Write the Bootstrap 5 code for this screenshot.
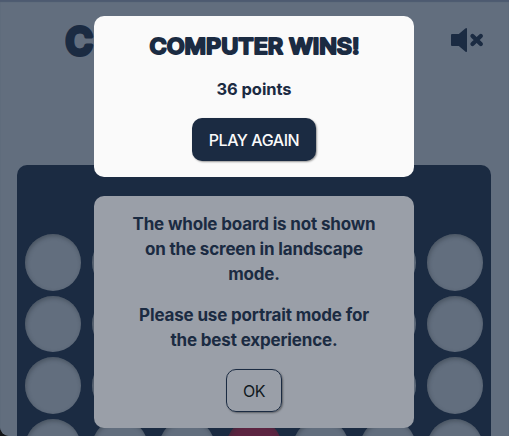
<!DOCTYPE html>
<html lang="en">
<head>
<meta charset="utf-8">
<meta name="viewport" content="width=device-width, initial-scale=1">
<title>Connect Four</title>
<link href="https://cdn.jsdelivr.net/npm/bootstrap@5.3.0/dist/css/bootstrap.min.css" rel="stylesheet">
<style>
:root{--navy:#1b2b42;--slate:#626e7e}
html{background:#111417}
body{height:436px;background:var(--slate);color:var(--navy);font-family:Inter,"Open Sans",sans-serif;border-bottom-left-radius:9px}
.game{height:436px;background:var(--slate);border-bottom-left-radius:9px;box-shadow:inset 0 2px 1px #4d5a70}
.game-head{height:165px;padding:22px 25px 0 65px}
.game-head svg{display:block}
.sound{margin-top:6px}
.board{margin:0 18px 0 17px;height:271px;padding:69px 8px 0;background:var(--navy);border-radius:10px 10px 0 0}
.slots{display:grid;grid-template-columns:repeat(7,56px);column-gap:11px;row-gap:5px}
.slot{height:56.7px;border-radius:50%;background:var(--slate);box-shadow:inset 1px 2px 4px rgba(35,45,55,.4)}
.slot-red{background:#5c2441}
.dialogs{padding:16px 0 0 94px;gap:19px}
.panel{width:320px;border-radius:10px}
.panel-result{height:161px;background:#fafafa}
.panel-notice{height:232px;background:#9a9fa8;padding-top:16px}
.title-svg{margin-top:16px;flex:none}
.points{font-size:16.5px;line-height:25px;margin:16px 0 16px;font-weight:700;letter-spacing:-.08px}
.notice{font-size:17px;line-height:25px;font-weight:700;white-space:nowrap;margin-bottom:16px;letter-spacing:-.16px}
.action{height:43px;border-radius:10px;padding:0;font-size:16px;box-shadow:1px 1px 2px rgba(0,0,0,.4)}
.action-play{width:124px;background:var(--navy);color:#fafafa;font-weight:500;letter-spacing:-.45px}
.action-ok{width:56px;border:1px solid var(--navy);color:#101820;font-weight:400;letter-spacing:-.5px}
</style>
</head>
<body class="overflow-hidden position-relative">
<main class="game overflow-hidden">
  <header class="game-head d-flex justify-content-between align-items-start">
    <svg width="34" height="42" viewBox="0 0 34 42" role="img" aria-label="C"><text x="0.600" y="33.300" font-family="Inter" font-weight="600" font-size="38.500" textLength="27.500" lengthAdjust="spacingAndGlyphs" fill="#1b2b42" stroke="#1b2b42" stroke-width="4.200" stroke-linejoin="round">C</text></svg>
    <svg class="sound" width="34" height="24" viewBox="0 0 34 24" aria-label="Sound off"><path fill="#1b2b42" d="M2 6h6.800L15.300.6Q17-.8 17 1.200v21.600q0 2-1.700.6L8.800 18H2q-1 0-1-1V7q0-1 1-1z"/><path d="M22.500 8l8.300 8m0-8l-8.300 8" stroke="#1b2b42" stroke-width="4.300" stroke-linecap="round"/></svg>
  </header>
  <section class="board overflow-hidden">
    <div class="slots">
      <i class="slot"></i><i class="slot"></i><i class="slot"></i><i class="slot"></i><i class="slot"></i><i class="slot"></i><i class="slot"></i>
      <i class="slot"></i><i class="slot"></i><i class="slot"></i><i class="slot"></i><i class="slot"></i><i class="slot"></i><i class="slot"></i>
      <i class="slot"></i><i class="slot"></i><i class="slot"></i><i class="slot"></i><i class="slot"></i><i class="slot"></i><i class="slot"></i>
      <i class="slot"></i><i class="slot"></i><i class="slot"></i><i class="slot slot-red"></i><i class="slot"></i><i class="slot"></i><i class="slot"></i>
    </div>
  </section>
</main>
<div class="dialogs position-absolute top-0 start-0 d-flex flex-column">
  <section class="panel panel-result d-flex flex-column align-items-center">
    <svg class="title-svg" width="216" height="29" viewBox="0 0 216 29"><text x="3.500" y="22" font-family="Inter" font-weight="600" font-size="21.500" textLength="210" lengthAdjust="spacingAndGlyphs" fill="#1b2b42" stroke="#1b2b42" stroke-width="2" stroke-linejoin="round">COMPUTER WINS!</text></svg>
    <p class="points">36 points</p>
    <button class="btn action action-play">PLAY AGAIN</button>
  </section>
  <section class="panel panel-notice d-flex flex-column align-items-center text-center">
    <p class="notice">The whole board is not shown<br>on the screen in landscape<br>mode.</p>
    <p class="notice">Please use portrait mode for<br>the best experience.</p>
    <button class="btn action action-ok">OK</button>
  </section>
</div>
<script src="https://cdn.jsdelivr.net/npm/bootstrap@5.3.0/dist/js/bootstrap.bundle.min.js"></script>
</body>
</html>
